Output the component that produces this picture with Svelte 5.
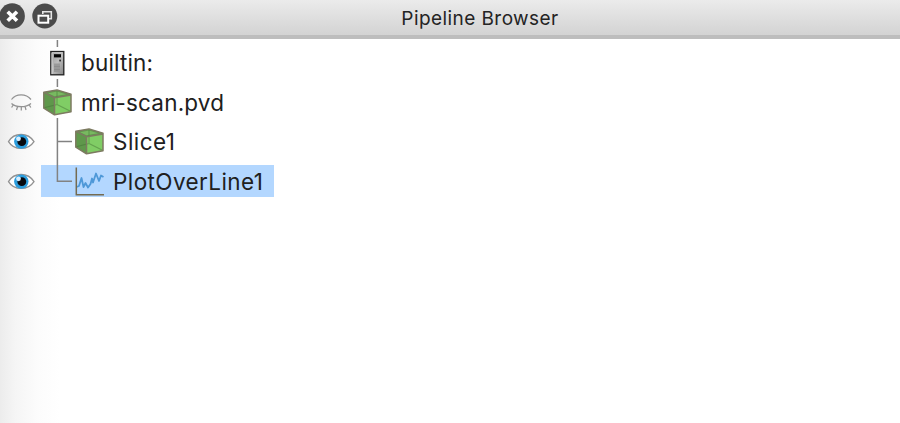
<script>
  const rows = [
    { name: 'builtin:', eye: '', icon: 'server', height: 43, child: false, text: 72,
      branch: 'M16.4 1V8M16.4 40V43' },
    { name: 'mri-scan.pvd', eye: 'closed', icon: 'cube', height: 40, child: false, text: 143,
      branch: 'M16.4 0V5M16.4 36V40' },
    { name: 'Slice1', eye: 'open', icon: 'cube', height: 39, child: true, text: 62,
      branch: 'M16.4 0V39M16.4 19.5H31' },
    { name: 'PlotOverLine1', eye: 'open', icon: 'plot', height: 40, child: true, text: 150, selected: true,
      branch: 'M16.4 0V20.2H31' }
  ];
</script>

<section class="panel">
  <header>
    <div class="buttons">
      <svg width="25" height="26" viewBox="0 0 25 26">
        <circle cx="12.2" cy="13" r="12.7" fill="#4b4b4b" />
        <path d="M7.7 8.7L17 17.8M17 8.7L7.7 17.8" stroke="#fff" stroke-width="3.7" />
      </svg>
      <svg width="26" height="26" viewBox="0 0 26 26">
        <circle cx="12.8" cy="13" r="12.5" fill="#4b4b4b" />
        <path d="M10.8 11V8.8H19.3V15.8H17" fill="none" stroke="#e5e5e5" stroke-width="1.6" />
        <rect x="6.5" y="12.7" width="9.7" height="7" fill="#4b4b4b" stroke="#fff" stroke-width="2" />
      </svg>
    </div>
    <h1>Pipeline Browser</h1>
  </header>
  <div class="tree">
    {#each rows as row}
      <div class="row" style:height="{row.height}px">
        <div class="eye">
          {#if row.eye === 'open'}
            <svg width="28" height="20" viewBox="0 0 28 20">
              <path d="M1.5 9.6C7 .1 21 .1 27 9.6C21 18.7 7 18.7 1.5 9.6Z" fill="#fff" stroke="#929292" stroke-width="1.3" />
              <circle cx="14.3" cy="9.6" r="7.2" fill="#2b9ddd" />
              <circle cx="14.8" cy="9.7" r="4.4" fill="#080b10" />
              <circle cx="11.5" cy="6.8" r="2.4" fill="#d5edff" />
            </svg>
          {:else if row.eye === 'closed'}
            <svg width="24" height="20" viewBox="0 0 24 20">
              <path d="M2.5 6.5C7 .4 17 .4 22 6.5M2.5 10.5C7 14.8 17 14.8 22 10.5M4.5 11.5L2.6 14.5M8.7 13.2L7.5 17M12.3 13.6V17.5M16 13.2L17 17M20 11.5L21.8 14.5" fill="none" stroke="#929292" stroke-width="1.25" />
            </svg>
          {/if}
        </div>
        <div class="item" class:child={row.child} class:selected={row.selected}>
          <svg class="branch" width="33" height={row.height} viewBox="0 0 33 {row.height}">
            <path d={row.branch} fill="none" stroke="#828282" stroke-width="1.5" />
          </svg>
          {#if row.icon === 'server'}
            <svg class="icon" width="32" height="28" viewBox="0 0 32 28">
              <defs>
                <linearGradient id="metal" x2="1" y2="1">
                  <stop stop-color="#999" /><stop offset=".5" stop-color="#bdbdbd" /><stop offset="1" stop-color="#858585" />
                </linearGradient>
              </defs>
              <rect x="9.8" y="2.5" width="13" height="23.3" fill="url(#metal)" stroke="#222" stroke-width="1.3" />
              <path d="M11 25V3.8H21.5" fill="none" stroke="#ddd" stroke-width=".8" />
              <rect x="13" y="5.2" width="7" height="3.2" fill="#050505" />
              <rect x="18.2" y="10.6" width="1.8" height="1.8" fill="#333" />
              <rect x="13" y="14.5" width="6" height="8.5" fill="#999" />
              <path d="M13 17.5H19M13 20.5H19" stroke="#888" stroke-width=".7" />
            </svg>
          {:else if row.icon === 'cube'}
            <svg class="icon" width="32" height="28" viewBox="0 0 32 28">
              <path d="M2.8 3.2L16 .9L30 5.2V22.7L13.5 25.8L2.8 19.2Z" fill="#62a348" />
              <path d="M2.8 3.2L13.5 8.8V25.8L2.8 19.2Z" fill="#5f984b" />
              <path d="M2.8 3.2L16 .9L30 5.2L13.5 8.8Z" fill="#62964e" />
              <path d="M7 4.2L16 2.4L25 5.2L13.5 7.3Z" fill="#78b960" />
              <path d="M13.5 8.8L30 6V22.7L13.5 25.8Z" fill="#80cd65" />
              <path d="M16 2V15.5L3 18.7M16 15.5L29.5 22.3" fill="none" stroke="#416f34" stroke-width="1.1" opacity=".45" />
              <path d="M2.8 3.2L16 .9L30 5.2V22.7L13.5 25.8L2.8 19.2ZM2.8 3.2L13.5 8.8V25.8M13.5 8.8L30 6" fill="none" stroke="#7d7a61" stroke-width="1.5" stroke-linejoin="round" />
            </svg>
          {:else}
            <svg class="icon" width="32" height="28" viewBox="0 0 32 28">
              <path d="M3.5 19L6 18L8.5 10L10.5 19L12.5 15L15 19.5L17.5 16L19 10.5L20 14.5L23 5.5L26 13L28 7.5L30.5 9" fill="none" stroke="#4e98d8" stroke-width="1.8" stroke-linejoin="round" />
              <path d="M3.3 -.5V26.7H31" fill="none" stroke="#756b50" stroke-width="1.5" />
            </svg>
          {/if}
          <svg class="label" width={row.text + 2} height="32">
            <text x="0" y="24" textLength={row.text}>{row.name}</text>
          </svg>
        </div>
      </div>
    {/each}
  </div>
</section>

<style>
  :global(body) { margin: 0; background: #fff; }
  .panel {
    width: 900px;
    height: 423px;
    display: flex;
    flex-direction: column;
    overflow: hidden;
    font-family: Inter, sans-serif;
    color: #242424;
  }
  header {
    box-sizing: border-box;
    height: 39px;
    flex: none;
    display: grid;
    grid-template-columns: 60px 1fr;
    background: linear-gradient(#ebebeb, #d3d3d3 35px);
    border-bottom: 4px solid #bdbdbd;
  }
  .buttons { display: flex; gap: 7px; padding-top: 3px; }
  h1 {
    margin: 0;
    font-size: 19px;
    font-weight: 400;
    line-height: 37px;
    letter-spacing: .43px;
    text-align: center;
  }
  .tree {
    flex: 1;
    background: linear-gradient(90deg, #ececec, #f5f5f5 15px, #fcfcfc 38px, #fff 60px);
  }
  .row { display: flex; align-items: flex-end; }
  .eye { width: 41px; height: 39px; display: flex; align-items: center; justify-content: center; flex: none; }
  .item { display: flex; align-items: center; height: 39px; }
  .branch { width: 33px; margin-right: -33px; align-self: flex-end; flex: none; overflow: visible; }
  .icon { flex: none; overflow: visible; }
  .child .icon { margin-left: 32px; }
  .label { margin-left: 8px; overflow: visible; }
  text { font: 22.5px Inter, sans-serif; fill: #202020; }
  .selected {
    width: 233px;
    background: linear-gradient(#b3d7ff, #b3d7ff) 0 3px / 100% 32px no-repeat;
  }
</style>
